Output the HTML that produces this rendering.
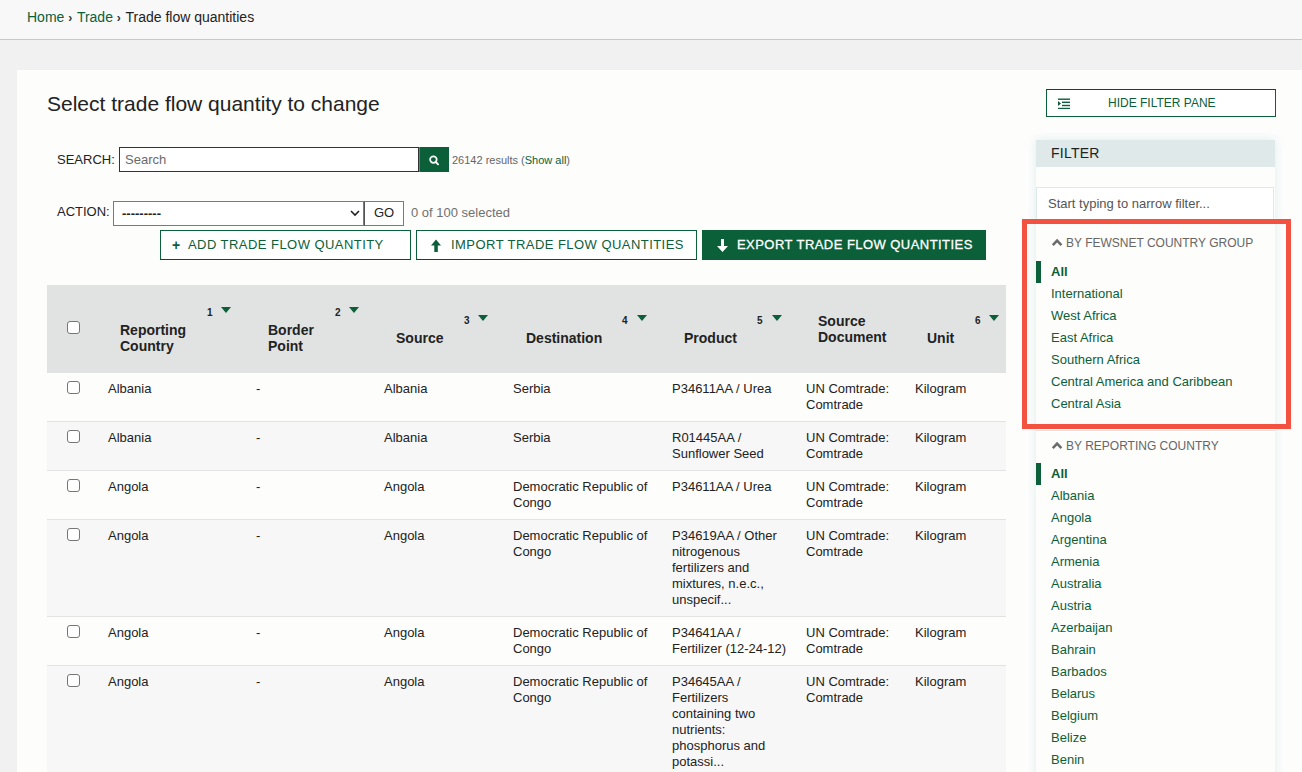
<!DOCTYPE html>
<html><head><meta charset="utf-8">
<style>
*{box-sizing:border-box;margin:0;padding:0}
html,body{width:1302px;height:772px;overflow:hidden}
body{font-family:"Liberation Sans",sans-serif;background:#f1f1f2;color:#222;position:relative}
.abs{position:absolute;white-space:nowrap}
#bc{position:absolute;left:0;top:0;width:1302px;height:40px;background:#f8f8f8;border-bottom:1px solid #c9c9c9}
#bc .t{position:absolute;left:27px;top:7px;font-size:14px;line-height:20px;color:#222}
a,.g{color:#0b6039;text-decoration:none}
.sep{font-size:12px;font-weight:700;color:#333;margin-right:1px}
#content{position:absolute;left:17px;top:70px;width:1285px;height:702px;background:#fdfdfc}
h1{position:absolute;left:47px;top:91px;font-size:21px;font-weight:400;line-height:26px;color:#222;white-space:nowrap}
.lbl{font-size:13px;line-height:16px;color:#222}
#sinput{position:absolute;left:119px;top:147px;width:300px;height:25px;border:1px solid #333;background:#fff}
#sinput span{position:absolute;left:5px;top:4px;font-size:13px;line-height:16px;color:#6a6a6a}
#sbtn{position:absolute;left:419px;top:147px;width:30px;height:25px;background:#0b6039}
#sel{position:absolute;left:113px;top:201px;width:251px;height:25px;border:1px solid #7a7a7a;background:#fff}
#go{position:absolute;left:364px;top:201px;width:40px;height:25px;border:1px solid #7a7a7a;border-left:1px solid #555;background:#fff;font-size:13px;text-align:center;line-height:22px;color:#222}
.btn{position:absolute;top:230px;height:30px;border:1px solid #0b6039;background:#fff;color:#0b6039;font-size:13px;letter-spacing:0.45px;line-height:28px;white-space:nowrap}
.btn.dark{background:#0b6039;color:#fff;-webkit-text-stroke:0.3px #fff}
.btn.lb{border-bottom-color:#333}
#tbl{position:absolute;left:47px;top:285px;width:959px;height:487px;overflow:hidden}
#thead{position:absolute;left:0;top:0;width:959px;height:88px;background:#e1e3e3}
.th{position:absolute;font-size:14px;font-weight:700;line-height:16px;color:#222;white-space:nowrap}
.so{position:absolute;font-size:10px;font-weight:700;line-height:12px;color:#222;white-space:nowrap}
.tri{position:absolute;width:0;height:0;border-left:5px solid transparent;border-right:5px solid transparent;border-top:6px solid #0b6039}
.row{position:absolute;left:0;width:959px;border-bottom:1px solid #e3e3e3}
.row.alt{background:#f7f7f7}
.td{position:absolute;top:8px;font-size:13px;line-height:16px;color:#222;white-space:nowrap}
.cb{position:absolute;width:13px;height:13px;border:1px solid #767676;border-radius:3px;background:#fff}
#filter{position:absolute;left:1036px;top:140px;width:239px;height:640px;background:#fdfdfc;box-shadow:0 0 10px rgba(150,205,205,0.3)}
#fhead{position:absolute;left:0;top:0;width:239px;height:27px;background:#dfe9e9}
#fhead span{position:absolute;left:15px;top:5px;font-size:14px;letter-spacing:0.25px;line-height:16px;color:#222}
#finput{position:absolute;left:0;top:47px;width:238px;height:34px;border:1px solid #dde9ea;background:#fff}
#finput span{position:absolute;left:11px;top:8px;font-size:13px;line-height:16px;color:#555}
.fh{position:absolute;left:30px;font-size:12px;line-height:14px;color:#666;white-space:nowrap}
.chev{position:absolute;left:14.5px;width:12px;height:9px}
.fi{position:absolute;left:15px;font-size:13px;line-height:16px;color:#0b6039;white-space:nowrap}
.fi.sel{font-weight:700}
.bar{position:absolute;left:0;width:5px;height:22px;background:#0b6039}
#red{position:absolute;left:1022px;top:219px;width:269px;height:210px;border:5px solid #f2523f}
</style></head><body>
<div id="bc"><div class="t"><a href="#">Home</a> <span class="sep">›</span> <a href="#">Trade</a> <span class="sep">›</span> Trade flow quantities</div></div>
<div id="content"></div>
<h1>Select trade flow quantity to change</h1>

<div class="abs lbl" style="left:57px;top:152px">SEARCH:</div>
<div id="sinput"><span>Search</span></div>
<div id="sbtn"><svg width="30" height="25" viewBox="0 0 30 25"><rect x="0" y="0" width="1" height="25" fill="#4f8f72"/><circle cx="14.4" cy="12.6" r="3.3" fill="none" stroke="#fff" stroke-width="1.7"/><line x1="16.8" y1="15" x2="19.1" y2="17.3" stroke="#fff" stroke-width="1.8" stroke-linecap="round"/></svg></div>
<div class="abs" style="left:452px;top:154px;font-size:11px;line-height:12px;color:#666">26142 results (<a href="#">Show all</a>)</div>

<div class="abs lbl" style="left:57px;top:204px">ACTION:</div>
<div id="sel"><span class="abs" style="left:8px;top:4px;font-size:13px;line-height:16px;font-weight:700;color:#222">---------</span>
<svg class="abs" style="left:236px;top:7px" width="10" height="8" viewBox="0 0 10 8"><polyline points="1,2 5,6 9,2" fill="none" stroke="#222" stroke-width="1.6"/></svg></div>
<div id="go">GO</div>
<div class="abs" style="left:411px;top:205px;font-size:13px;line-height:16px;color:#707070">0 of 100 selected</div>

<div class="btn lb" style="left:160px;width:251px"><span class="abs" style="left:11px;top:0;font-weight:700;font-size:14px">+</span><span class="abs" style="left:27px;top:0">ADD TRADE FLOW QUANTITY</span></div>
<div class="btn lb" style="left:416px;width:281px"><svg class="abs" style="left:14px;top:8px" width="11" height="13" viewBox="0 0 11 13"><polygon points="5,0.5 10,6.5 6.8,6.5 6.8,13 3.3,13 3.3,6.5 0,6.5" fill="#0b6039"/></svg><span class="abs" style="left:34px;top:0">IMPORT TRADE FLOW QUANTITIES</span></div>
<div class="btn dark" style="left:702px;width:284px"><svg class="abs" style="left:14px;top:8px" width="11" height="13" viewBox="0 0 11 13"><polygon points="5.5,13 11,7 7,7 7,0 4,0 4,7 0,7" fill="#fff"/></svg><span class="abs" style="left:34px;top:0">EXPORT TRADE FLOW QUANTITIES</span></div>

<div id="tbl">
 <div id="thead">
  <div class="cb" style="left:20px;top:36px"></div>
  <div class="th" style="left:73px;top:37px">Reporting<br>Country</div>
  <div class="so" style="left:160px;top:22px">1</div><div class="tri" style="left:174px;top:22px"></div>
  <div class="th" style="left:221px;top:37px">Border<br>Point</div>
  <div class="so" style="left:288px;top:22px">2</div><div class="tri" style="left:302px;top:22px"></div>
  <div class="th" style="left:349px;top:45px">Source</div>
  <div class="so" style="left:417px;top:30px">3</div><div class="tri" style="left:431px;top:30px"></div>
  <div class="th" style="left:479px;top:45px">Destination</div>
  <div class="so" style="left:575px;top:30px">4</div><div class="tri" style="left:590px;top:30px"></div>
  <div class="th" style="left:637px;top:45px">Product</div>
  <div class="so" style="left:710px;top:30px">5</div><div class="tri" style="left:725px;top:30px"></div>
  <div class="th" style="left:771px;top:28px">Source<br>Document</div>
  <div class="th" style="left:880px;top:45px">Unit</div>
  <div class="so" style="left:928px;top:30px">6</div><div class="tri" style="left:942px;top:30px"></div>
 </div>
 <!-- rows -->
 <div class="row" style="top:88px;height:49px">
  <div class="cb" style="left:20px;top:8px"></div>
  <div class="td" style="left:61px">Albania</div><div class="td" style="left:209px">-</div><div class="td" style="left:337px">Albania</div>
  <div class="td" style="left:466px">Serbia</div><div class="td" style="left:625px">P34611AA / Urea</div>
  <div class="td" style="left:759px">UN Comtrade:<br>Comtrade</div><div class="td" style="left:868px">Kilogram</div>
 </div>
 <div class="row alt" style="top:137px;height:49px">
  <div class="cb" style="left:20px;top:8px"></div>
  <div class="td" style="left:61px">Albania</div><div class="td" style="left:209px">-</div><div class="td" style="left:337px">Albania</div>
  <div class="td" style="left:466px">Serbia</div><div class="td" style="left:625px">R01445AA /<br>Sunflower Seed</div>
  <div class="td" style="left:759px">UN Comtrade:<br>Comtrade</div><div class="td" style="left:868px">Kilogram</div>
 </div>
 <div class="row" style="top:186px;height:49px">
  <div class="cb" style="left:20px;top:8px"></div>
  <div class="td" style="left:61px">Angola</div><div class="td" style="left:209px">-</div><div class="td" style="left:337px">Angola</div>
  <div class="td" style="left:466px">Democratic Republic of<br>Congo</div><div class="td" style="left:625px">P34611AA / Urea</div>
  <div class="td" style="left:759px">UN Comtrade:<br>Comtrade</div><div class="td" style="left:868px">Kilogram</div>
 </div>
 <div class="row alt" style="top:235px;height:97px">
  <div class="cb" style="left:20px;top:8px"></div>
  <div class="td" style="left:61px">Angola</div><div class="td" style="left:209px">-</div><div class="td" style="left:337px">Angola</div>
  <div class="td" style="left:466px">Democratic Republic of<br>Congo</div><div class="td" style="left:625px">P34619AA / Other<br>nitrogenous<br>fertilizers and<br>mixtures, n.e.c.,<br>unspecif...</div>
  <div class="td" style="left:759px">UN Comtrade:<br>Comtrade</div><div class="td" style="left:868px">Kilogram</div>
 </div>
 <div class="row" style="top:332px;height:49px">
  <div class="cb" style="left:20px;top:8px"></div>
  <div class="td" style="left:61px">Angola</div><div class="td" style="left:209px">-</div><div class="td" style="left:337px">Angola</div>
  <div class="td" style="left:466px">Democratic Republic of<br>Congo</div><div class="td" style="left:625px">P34641AA /<br>Fertilizer (12-24-12)</div>
  <div class="td" style="left:759px">UN Comtrade:<br>Comtrade</div><div class="td" style="left:868px">Kilogram</div>
 </div>
 <div class="row alt" style="top:381px;height:113px">
  <div class="cb" style="left:20px;top:8px"></div>
  <div class="td" style="left:61px">Angola</div><div class="td" style="left:209px">-</div><div class="td" style="left:337px">Angola</div>
  <div class="td" style="left:466px">Democratic Republic of<br>Congo</div><div class="td" style="left:625px">P34645AA /<br>Fertilizers<br>containing two<br>nutrients:<br>phosphorus and<br>potassi...</div>
  <div class="td" style="left:759px">UN Comtrade:<br>Comtrade</div><div class="td" style="left:868px">Kilogram</div>
 </div>
</div>

<!-- filter pane -->
<div class="btn" style="left:1046px;top:89px;width:230px;height:28px;font-size:12px;letter-spacing:0;line-height:26px;border-top-color:#333">
 <svg class="abs" style="left:11px;top:8px" width="13" height="11" viewBox="0 0 13 11"><rect x="0" y="0.5" width="12" height="1.4" fill="#0b6039"/><rect x="4" y="3.6" width="8" height="1.4" fill="#0b6039"/><rect x="4" y="6.8" width="8" height="1.4" fill="#0b6039"/><rect x="0" y="9.8" width="12" height="1.4" fill="#0b6039"/><polygon points="0,3 3,5.5 0,8" fill="#0b6039"/></svg>
 <span class="abs" style="left:61px;top:0">HIDE FILTER PANE</span>
</div>
<div id="filter">
 <div id="fhead"><span>FILTER</span></div>
 <div id="finput"><span>Start typing to narrow filter...</span></div>
 <svg class="chev" style="top:98px" viewBox="0 0 11 9"><polyline points="1.3,7.2 5.6,2.6 9.9,7.2" fill="none" stroke="#6b6b6b" stroke-width="2.5"/></svg>
 <div class="fh" style="top:96px">BY FEWSNET COUNTRY GROUP</div>
 <div class="bar" style="top:121px"></div>
 <div class="fi sel" style="top:124px">All</div>
 <div class="fi" style="top:146px">International</div>
 <div class="fi" style="top:168px">West Africa</div>
 <div class="fi" style="top:190px">East Africa</div>
 <div class="fi" style="top:212px">Southern Africa</div>
 <div class="fi" style="top:234px">Central America and Caribbean</div>
 <div class="fi" style="top:256px">Central Asia</div>
 <div class="abs" style="left:0;top:290px;width:239px;height:1px;background:#e0e0e0"></div>
 <svg class="chev" style="top:301px" viewBox="0 0 11 9"><polyline points="1.3,7.2 5.6,2.6 9.9,7.2" fill="none" stroke="#6b6b6b" stroke-width="2.5"/></svg>
 <div class="fh" style="top:299px">BY REPORTING COUNTRY</div>
 <div class="bar" style="top:323px"></div>
 <div class="fi sel" style="top:326px">All</div>
 <div class="fi" style="top:348px">Albania</div>
 <div class="fi" style="top:370px">Angola</div>
 <div class="fi" style="top:392px">Argentina</div>
 <div class="fi" style="top:414px">Armenia</div>
 <div class="fi" style="top:436px">Australia</div>
 <div class="fi" style="top:458px">Austria</div>
 <div class="fi" style="top:480px">Azerbaijan</div>
 <div class="fi" style="top:502px">Bahrain</div>
 <div class="fi" style="top:524px">Barbados</div>
 <div class="fi" style="top:546px">Belarus</div>
 <div class="fi" style="top:568px">Belgium</div>
 <div class="fi" style="top:590px">Belize</div>
 <div class="fi" style="top:612px">Benin</div>
</div>
<div id="red"></div>
</body></html>
